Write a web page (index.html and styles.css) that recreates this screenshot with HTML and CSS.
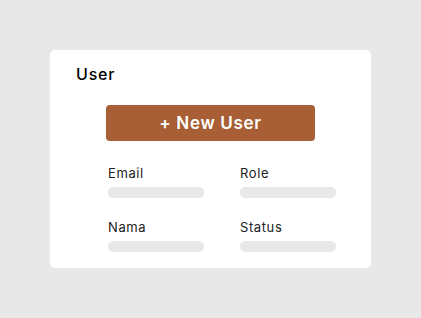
FILE: index.html
```html
<!DOCTYPE html>
<html lang="en">
<head>
    <meta charset="UTF-8">
    <meta name="viewport" content="width=device-width, initial-scale=1.0">
    <title>User</title>
    <link rel="stylesheet" href="styles.css">
</head>
<body>
    <div class="card">
        <h1 class="title">User</h1>

        <button class="new-btn">+ New User</button>

        <div class="fields">
            <div class="field">
                <span class="label">Email</span>
                <div class="bar"></div>
            </div>
            <div class="field">
                <span class="label">Role</span>
                <div class="bar"></div>
            </div>
            <div class="field">
                <span class="label">Nama</span>
                <div class="bar"></div>
            </div>
            <div class="field">
                <span class="label">Status</span>
                <div class="bar"></div>
            </div>
        </div>
    </div>
</body>
</html>
```

FILE: styles.css
```css
* {
    margin: 0;
    padding: 0;
    box-sizing: border-box;
}

body {
    font-family: Inter, 'Noto Sans', sans-serif;
    background: #e8e8e8;
    padding: 50px;
    color: #111;
}

.card {
    width: 321px;
    height: 218px;
    background: white;
    border-radius: 5px;
    padding: 14px 0 0 26px;
}

.title {
    font-size: 16px;
    font-weight: 500;
    line-height: 20px;
    letter-spacing: 0.8px;
    color: #000;
}

.new-btn {
    display: block;
    width: 209px;
    height: 36px;
    margin: 21px 0 0 30px;
    background: #a85f35;
    color: white;
    border: none;
    border-radius: 4px;
    font-family: inherit;
    font-size: 17px;
    font-weight: 600;
    letter-spacing: 0.7px;
}

.fields {
    display: grid;
    grid-template-columns: 96px 96px;
    column-gap: 36px;
    row-gap: 21px;
    margin: 24px 0 0 32px;
}

.field {
    display: flex;
    flex-direction: column;
    gap: 6px;
}

.label {
    font-size: 13px;
    line-height: 16px;
    letter-spacing: 0.6px;
    color: #222;
}

.bar {
    height: 11px;
    border-radius: 6px;
    background: #e8e8e8;
}
```
